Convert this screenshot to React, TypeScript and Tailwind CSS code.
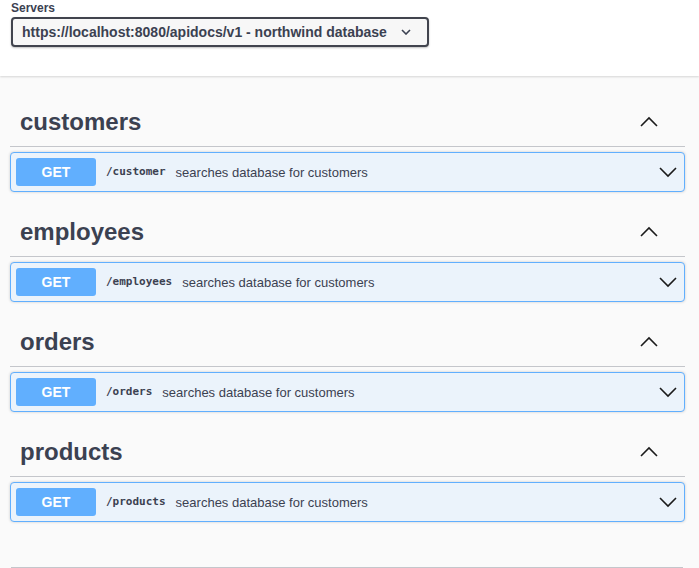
import React from "react";

const sections = [
  { name: "customers", path: "/customer" },
  { name: "employees", path: "/employees" },
  { name: "orders", path: "/orders" },
  { name: "products", path: "/products" },
];

function ChevronUp() {
  return (
    <svg width="20" height="20" viewBox="0 0 20 20" fill="none" stroke="#1b1b1b" strokeWidth="1.6">
      <path d="M2 14 L10 6 L18 14" />
    </svg>
  );
}

function ChevronDown() {
  return (
    <svg width="20" height="20" viewBox="0 0 20 20" fill="none" stroke="#1b1b1b" strokeWidth="1.6">
      <path d="M2 6 L10 14 L18 6" />
    </svg>
  );
}

export default function App() {
  return (
    <div
      className="w-[699px] h-[568px] overflow-hidden bg-[#fafafa] text-[#3b4151]"
      style={{ fontFamily: '"Liberation Sans", Arial, sans-serif' }}
    >
      <div className="h-[76px] bg-white shadow-[0_1px_2px_0_rgba(0,0,0,0.15)] px-[11px] pt-[1px]">
        <div className="text-[12px] font-bold leading-[15px] text-[#3b4151]">Servers</div>
        <div className="mt-[1px] w-[418px] h-[30px] border-2 border-[#41444e] rounded-[4px] bg-[#f7f7f7] shadow-[0_1px_2px_0_rgba(0,0,0,0.25)] flex items-center pl-[9px] pr-[16px]">
          <span className="text-[14px] font-bold text-[#3b4151] flex-1">
            https://localhost:8080/apidocs/v1 - northwind database
          </span>
          <svg width="10" height="6" viewBox="0 0 10 6" fill="none" stroke="#3b4151" strokeWidth="1.6">
            <path d="M1 1 L5 5 L9 1" />
          </svg>
        </div>
      </div>
      <div className="pt-[24px] pl-[10px] pr-[14px]">
        {sections.map((s) => (
          <div key={s.name} className="mb-[18px]">
            <div className="h-[47px] border-b border-[#c4c6cb] flex items-center pl-[10px] pr-[26px] pb-[3px]">
              <h3 className="flex-1 text-[24px] font-bold text-[#3b4151] leading-[28px]">{s.name}</h3>
              <ChevronUp />
            </div>
            <div className="mt-[5px] h-[40px] border border-[#61affe] rounded-[4px] bg-[#ebf3fb] flex items-center pl-[5px] pr-[6px] shadow-[0_0_3px_rgba(0,0,0,0.19)]">
              <span className="w-[80px] h-[28px] rounded-[3px] bg-[#61affe] text-white text-[14px] font-bold flex items-center justify-center">
                GET
              </span>
              <span
                className="ml-[10px] text-[11px] font-bold text-[#3b4151]"
                style={{ fontFamily: '"DejaVu Sans Mono", monospace' }}
              >
                {s.path}
              </span>
              <span className="ml-[10px] flex-1 text-[13px] text-[#3b4151] pt-[2px]">searches database for customers</span>
              <ChevronDown />
            </div>
          </div>
        ))}
        <div className="mt-[45px] ml-[1px] mr-[2px] border-t border-[#c4c6cb]" />
      </div>
    </div>
  );
}
